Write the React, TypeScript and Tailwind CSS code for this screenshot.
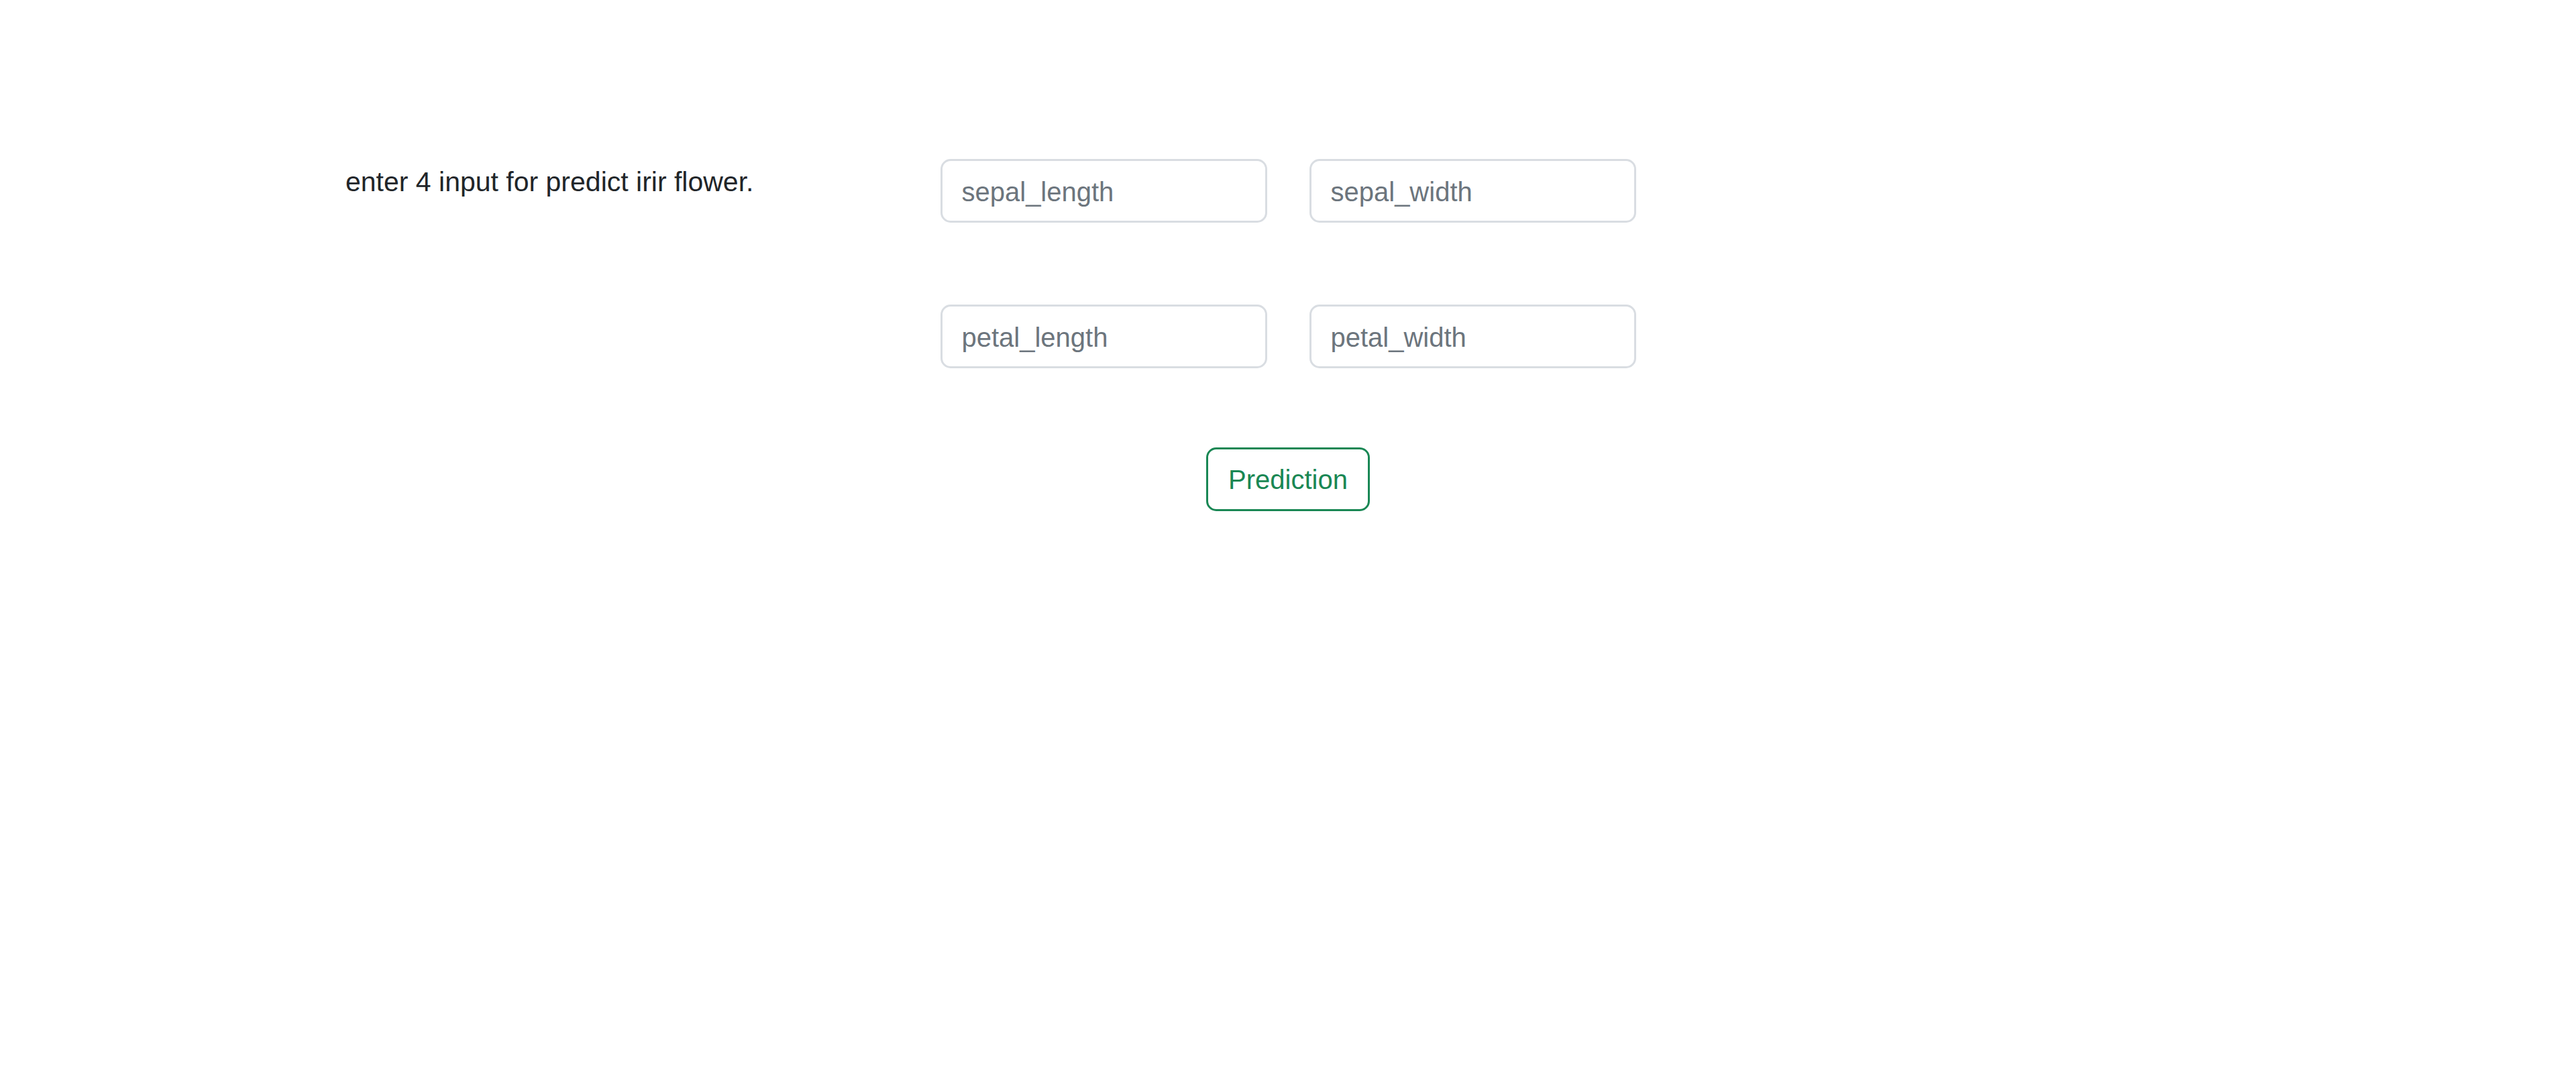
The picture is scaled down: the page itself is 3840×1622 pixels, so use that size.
import { useState } from "react";

const FIELDS = [
  ["sepal_length", "sepal_width"],
  ["petal_length", "petal_width"],
];

export default function App() {
  const [values, setValues] = useState<Record<string, string>>({});

  return (
    <div
      className="min-h-screen bg-white pt-[237px] text-[40px] leading-[60px] text-[#212529]"
      style={{ fontFamily: "'Liberation Sans', Arial, sans-serif" }}
    >
      <div className="grid grid-cols-[1fr_auto_1fr]">
        {/* intro text, left column */}
        <div className="pl-[515px] pt-[4px] text-[41px]">enter 4 input for predict irir flower.</div>

        {/* input rows */}
        <div className="flex flex-col gap-[122px]">
          {FIELDS.map((row) => (
            <div key={row[0]} className="flex gap-[63px]">
              {row.map((name) => (
                <input
                  key={name}
                  name={name}
                  placeholder={name}
                  value={values[name] ?? ""}
                  onChange={(e) => setValues({ ...values, [name]: e.target.value })}
                  className="h-[95px] w-[487px] rounded-[15px] border-[3px] border-[#d9dde2] bg-white px-[29px] pt-[3px] text-[40px] leading-[60px] text-[#212529] outline-none placeholder:text-[#6c757d]"
                />
              ))}
            </div>
          ))}
        </div>
        <div />

        {/* submit */}
        <div />
        <div className="mt-[118px] flex justify-center">
          <button className="h-[95px] rounded-[15px] border-[3px] border-[#198754] bg-white px-[30px] text-[40px] leading-[60px] text-[#198754]">
            Prediction
          </button>
        </div>
        <div />
      </div>
    </div>
  );
}
